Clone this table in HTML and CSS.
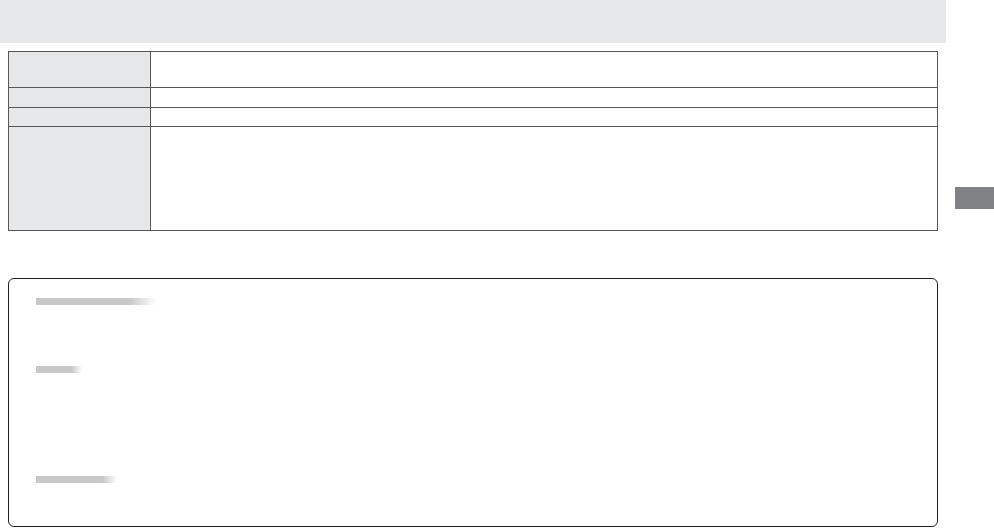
FILE: index.html
```html
<!DOCTYPE html>
<html lang="en">
<head>
    <meta charset="UTF-8">
    <meta name="viewport" content="width=device-width, initial-scale=1.0">
    <title>Manual Page</title>
    <link rel="stylesheet" href="styles.css">
</head>
<body>
    <div class="page">
        <div class="main">
            <div class="header"></div>
            <div class="content">
                <div class="spec-table">
                    <div class="spec-row row-1">
                        <div class="spec-label"></div>
                        <div class="spec-value"></div>
                    </div>
                    <div class="spec-row row-2">
                        <div class="spec-label"></div>
                        <div class="spec-value"></div>
                    </div>
                    <div class="spec-row row-3">
                        <div class="spec-label"></div>
                        <div class="spec-value"></div>
                    </div>
                    <div class="spec-row row-4">
                        <div class="spec-label"></div>
                        <div class="spec-value"></div>
                    </div>
                </div>

                <div class="note-box">
                    <div class="note-section section-1">
                        <div class="note-bar bar-1"></div>
                    </div>
                    <div class="note-section section-2">
                        <div class="note-bar bar-2"></div>
                    </div>
                    <div class="note-section section-3">
                        <div class="note-bar bar-3"></div>
                    </div>
                </div>
            </div>
        </div>
        <div class="side">
            <div class="side-tab"></div>
        </div>
    </div>
</body>
</html>
```

FILE: styles.css
```css
body {
    font-family: "Liberation Sans", Arial, sans-serif;
    margin: 0;
    background-color: #ffffff;
}
.page {
    display: flex;
    width: 994px;
    height: 528px;
}
.main {
    width: 946px;
}
.header {
    height: 43px;
    background-color: #e6e7e9;
}
.content {
    padding: 8px 8px 0 8px;
}
.spec-table {
    border: 1px solid #58585a;
}
.spec-row {
    display: flex;
    border-top: 1px solid #58585a;
}
.spec-row.row-1 {
    border-top: none;
    height: 35px;
}
.spec-row.row-2 {
    height: 19px;
}
.spec-row.row-3 {
    height: 18px;
}
.spec-row.row-4 {
    height: 103px;
}
.spec-label {
    width: 142px;
    box-sizing: border-box;
    border-right: 1px solid #58585a;
    background-color: #e6e7e9;
}
.spec-value {
    flex: 1;
}
.note-box {
    margin-top: 47px;
    height: 249px;
    box-sizing: border-box;
    border: 1px solid #231f20;
    border-radius: 6px;
    padding: 19px 0 0 27px;
}
.note-section.section-1 {
    height: 68px;
}
.note-section.section-2 {
    height: 110px;
}
.note-bar {
    height: 7px;
}
.bar-1 {
    width: 120px;
    background: linear-gradient(to right, #c8c8c8 78%, #ffffff);
}
.bar-2 {
    width: 46px;
    background: linear-gradient(to right, #c8c8c8 78%, #ffffff);
}
.bar-3 {
    width: 81px;
    background: linear-gradient(to right, #c8c8c8 82%, #ffffff);
}
.side {
    flex: 1;
    padding: 187px 0 0 9px;
}
.side-tab {
    height: 22px;
    background-color: #818285;
}
```
